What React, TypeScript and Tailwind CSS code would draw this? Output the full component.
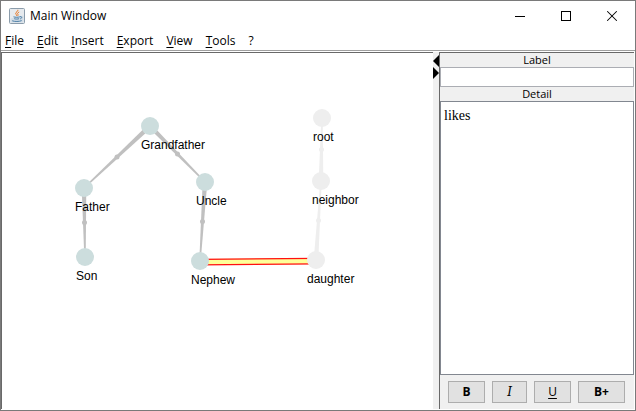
import { Minus, X } from 'lucide-react';

type Node = { id: string; x: number; y: number; faded?: boolean };

const nodes: Node[] = [
  { id: 'Grandfather', x: 150, y: 126 },
  { id: 'Father', x: 84, y: 188 },
  { id: 'Uncle', x: 205, y: 182 },
  { id: 'Son', x: 85, y: 257 },
  { id: 'Nephew', x: 200, y: 261 },
  { id: 'root', x: 322, y: 118, faded: true },
  { id: 'neighbor', x: 321, y: 181, faded: true },
  { id: 'daughter', x: 316, y: 260, faded: true },
];

// wide end first
const edges = [
  ['Grandfather', 'Father'],
  ['Grandfather', 'Uncle'],
  ['Father', 'Son'],
  ['Uncle', 'Nephew'],
  ['neighbor', 'root'],
  ['daughter', 'neighbor'],
];

const menus = ['File', 'Edit', 'Insert', 'Export', 'View', 'Tools'];

const findNode = (id: string) => nodes.find((n) => n.id === id)!;

// Tapered line between two nodes
function wedge(a: Node, b: Node) {
  const len = Math.hypot(b.x - a.x, b.y - a.y);
  const nx = -(b.y - a.y) / len;
  const ny = (b.x - a.x) / len;
  const wide = 2.3;
  const thin = 0.7;
  return [
    [a.x + nx * wide, a.y + ny * wide],
    [b.x + nx * thin, b.y + ny * thin],
    [b.x - nx * thin, b.y - ny * thin],
    [a.x - nx * wide, a.y - ny * wide],
  ].join(' ');
}

function JavaIcon() {
  return (
    <svg width="16" height="16" viewBox="0 0 16 16" fill="none" aria-hidden="true">
      <rect x="0.5" y="0.5" width="15" height="15" rx="1" fill="#e6eaee" stroke="#8b9cab" />
      <path d="M1.5 14.5h13v-7l-13 3z" fill="#d3dde6" />
      <path d="M8.8 1.8c.8 1.6-2.4 2.3-2.1 3.8.1.8 1.2 1.2 1 2.4M10.2 4c-1.8.9-2 1.5-1.3 2.4.4.6.1 1.1-.3 1.5" stroke="#e8731c" />
      <path d="M4.5 8.8c1.6.6 4.6.6 6.3 0M5.2 10.7c1.4.5 3.5.5 4.9 0M3.2 12.8c2.4.9 7 .9 9.5-.2M11 8.7c2.4-.6 2.2 1.7.2 2.2" stroke="#4b7ea6" />
    </svg>
  );
}

function Graph() {
  return (
    <svg width="430" height="300" viewBox="2 53 430 300" className="block font-['Liberation_Sans',Arial,sans-serif] text-xs">
      {edges.map(([from, to]) => {
        const a = findNode(from);
        const b = findNode(to);
        return (
          <g key={from + to} fill={a.faded ? '#eeeeee' : '#c0c0c0'}>
            <polygon points={wedge(a, b)} />
            <circle cx={(a.x + b.x) / 2} cy={(a.y + b.y) / 2} r="2.5" />
          </g>
        );
      })}
      <polygon points="200,259 316,258 316,264 200,265" fill="#ffff99" />
      <path d="M200 259.3L316 258.3M200 264.9L316 263.9" stroke="#ff1010" strokeWidth="1.2" />
      {nodes.map((n) => (
        <circle key={n.id} cx={n.x} cy={n.y} r="9" fill={n.faded ? '#eeeeee' : '#ccdddd'} />
      ))}
      {nodes.map((n) => (
        <text key={n.id} x={n.x - 9} y={n.y + 23}>
          {n.id}
        </text>
      ))}
    </svg>
  );
}

export default function App() {
  return (
    <div className="flex h-screen flex-col border border-[#7a7a7a] bg-white font-['Open_Sans','Noto_Sans',sans-serif] text-xs text-black">
      <header className="flex h-[30px] shrink-0 items-center pl-2">
        <JavaIcon />
        <h1 className="ml-[5px] flex-1">Main Window</h1>
        <button aria-label="Minimize" className="flex h-full w-[46px] items-center justify-center">
          <Minus size={16} strokeWidth={1.5} shapeRendering="crispEdges" />
        </button>
        <button aria-label="Maximize" className="flex h-full w-[46px] items-center justify-center">
          <svg width="10" height="10" viewBox="0 0 10 10" fill="none">
            <rect x="0.5" y="0.5" width="9" height="9" stroke="#000" />
          </svg>
        </button>
        <button aria-label="Close" className="flex h-full w-[46px] items-center justify-center">
          <X size={18} strokeWidth={1.4} />
        </button>
      </header>

      <nav className="flex h-5 shrink-0 items-center gap-[13px] border-b border-[#a0a0a0] pl-1">
        {menus.map((name) => (
          <button key={name}>
            <span className="underline underline-offset-2">{name[0]}</span>
            {name.slice(1)}
          </button>
        ))}
        <button>?</button>
      </nav>

      <div className="mt-px flex min-h-0 flex-1 pr-px pb-px">
        <main className="min-w-0 flex-1 overflow-hidden border-t border-l border-[#696969]">
          <Graph />
        </main>

        <div className="flex w-1.5 shrink-0 flex-col items-end bg-[#f0f0f0] pt-[3px]">
          <button aria-label="Collapse left">
            <svg width="6" height="12" viewBox="0 0 6 12" className="block">
              <path d="M6 0v12L0 6z" />
            </svg>
          </button>
          <button aria-label="Collapse right">
            <svg width="6" height="12" viewBox="0 0 6 12" className="block">
              <path d="M0 0v12l6-6z" />
            </svg>
          </button>
        </div>

        <aside className="flex w-[195px] shrink-0 flex-col border-t border-l border-[#696969] bg-[#f0f0f0]">
          <label htmlFor="label" className="h-[14px] text-center text-[11px] leading-[14px]">
            Label
          </label>
          <input id="label" type="text" className="h-5 w-full border border-[#abadb3] bg-white px-1 outline-none" />
          <label htmlFor="detail" className="h-[14px] text-center text-[11px] leading-[14px]">
            Detail
          </label>
          <textarea
            id="detail"
            defaultValue="likes"
            className="w-full flex-1 resize-none border border-[#828790] bg-white px-[3px] py-1.5 font-['Liberation_Serif','Times_New_Roman',serif] text-sm leading-4 outline-none"
          />
          <div className="flex gap-[7px] px-2 py-1.5 text-xs leading-4">
            <button className="h-[22px] w-[37px] border border-[#adadad] bg-[#e1e1e1] font-bold">B</button>
            <button className="h-[22px] w-[35px] border border-[#adadad] bg-[#e1e1e1] font-['DejaVu_Serif',serif] italic">I</button>
            <button className="h-[22px] w-[37px] border border-[#adadad] bg-[#e1e1e1] underline underline-offset-2">U</button>
            <button className="h-[22px] w-[47px] border border-[#adadad] bg-[#e1e1e1] font-bold">B+</button>
          </div>
        </aside>
      </div>
    </div>
  );
}
